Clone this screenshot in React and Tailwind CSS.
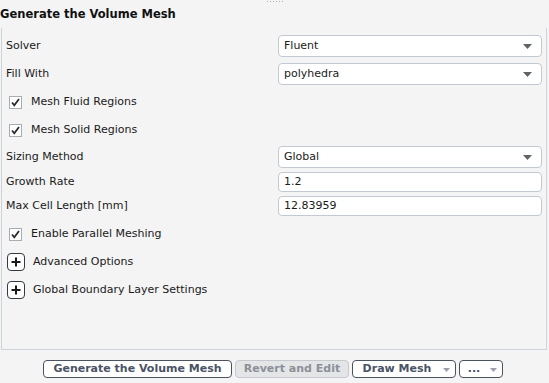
import React from "react";

const font = { fontFamily: '"DejaVu Sans", Verdana, sans-serif' };

function Arrow({ className = "" }) {
  return (
    <svg width="9" height="5" viewBox="0 0 9 5" className={className}>
      <path d="M0 0 L9 0 L4.5 5 Z" fill="#5f6368" />
    </svg>
  );
}

function Select({ value }) {
  return (
    <div className="flex h-[22px] w-[264px] items-center justify-between rounded-[4px] border border-[#c3c9d3] bg-white pl-[5px] pr-[9px] text-[#1a1a1a]">
      <span>{value}</span>
      <Arrow />
    </div>
  );
}

function Input({ value }) {
  return (
    <div className="flex h-[20px] w-[264px] items-center rounded-[4px] border border-[#c3c9d3] bg-white pl-[5px] text-[#1a1a1a]">
      {value}
    </div>
  );
}

function Check() {
  return (
    <div className="flex h-[13px] w-[13px] items-center justify-center border border-[#a8acb3] bg-white">
      <svg width="11" height="11" viewBox="0 0 11 11">
        <path d="M2 5.5 L4.3 8.3 L9 2" stroke="#2a2a2a" strokeWidth="1.8" fill="none" />
      </svg>
    </div>
  );
}

function Plus() {
  return (
    <div className="flex h-[18px] w-[18px] items-center justify-center rounded-[4px] border-[1.5px] border-[#333a44] bg-white">
      <svg width="10" height="10" viewBox="0 0 10 10">
        <path d="M5 0.5 V9.5 M0.5 5 H9.5" stroke="#1a1a1a" strokeWidth="2" />
      </svg>
    </div>
  );
}

function Row({ label, children, h }) {
  return (
    <div className={`flex items-center ${h}`}>
      <div className="w-[276px] pl-[4px]">{label}</div>
      {children}
    </div>
  );
}

function CheckRow({ label, cls = "" }) {
  return (
    <div className={`flex h-[28px] items-center gap-[9px] pl-[7px] ${cls}`}>
      <Check />
      <span>{label}</span>
    </div>
  );
}

function PlusRow({ label }) {
  return (
    <div className="flex h-[28px] items-center gap-[8px] pl-[5px]">
      <Plus />
      <span>{label}</span>
    </div>
  );
}

function Btn({ children, disabled, arrow, w }) {
  return (
    <div
      className={`relative flex h-[18px] items-center justify-center rounded-[4px] border font-bold ${w} ${
        disabled
          ? "border-[#c6c9ce] bg-[#e4e5e7] text-[#8b9098]"
          : "border-[#4b5260] bg-white text-[#4a5366]"
      }`}
    >
      <span className={arrow ? "pr-[14px]" : ""}>{children}</span>
      {arrow && (
        <svg width="7" height="4" viewBox="0 0 7 4" className="absolute right-[5px] top-[7px]">
          <path d="M0 0 L7 0 L3.5 4 Z" fill="#9aa0a8" />
        </svg>
      )}
    </div>
  );
}

export default function App() {
  return (
    <div
      className="relative h-[383px] w-[549px] overflow-hidden bg-[#f4f4f4] text-[11px] text-[#1a1a1a]"
      style={font}
    >
      <div className="absolute left-[267px] top-[1px] flex gap-[2px]">
        {[0, 1, 2, 3, 4, 5].map((i) => (
          <div key={i} className="h-[1px] w-[1px] bg-[#b0b0b0]" />
        ))}
      </div>
      <div className="flex h-[28px] items-center pt-[2px] text-[11.5px] font-bold text-[#111]">
        Generate the Volume Mesh
      </div>
      <div className="ml-[1px] mr-[2px] h-[322px] border-b border-l border-r border-[#cdd3dd] pt-[4px]">
        <Row label="Solver" h="h-[28px]">
          <Select value="Fluent" />
        </Row>
        <Row label="Fill With" h="h-[28px]">
          <Select value="polyhedra" />
        </Row>
        <CheckRow label="Mesh Fluid Regions" />
        <CheckRow label="Mesh Solid Regions" />
        <Row label="Sizing Method" h="h-[26px]">
          <Select value="Global" />
        </Row>
        <Row label="Growth Rate" h="h-[24px]">
          <Input value="1.2" />
        </Row>
        <Row label="Max Cell Length [mm]" h="h-[24px]">
          <Input value="12.83959" />
        </Row>
        <CheckRow label="Enable Parallel Meshing" cls="mt-[2px]" />
        <PlusRow label="Advanced Options" />
        <PlusRow label="Global Boundary Layer Settings" />
      </div>
      <div className="flex items-center gap-[3px] pl-[43px] pt-[10px]">
        <Btn w="w-[189px]">Generate the Volume Mesh</Btn>
        <Btn w="w-[114px]" disabled>Revert and Edit</Btn>
        <Btn w="w-[104px]" arrow>Draw Mesh</Btn>
        <Btn w="w-[44px]" arrow>...</Btn>
      </div>
    </div>
  );
}
